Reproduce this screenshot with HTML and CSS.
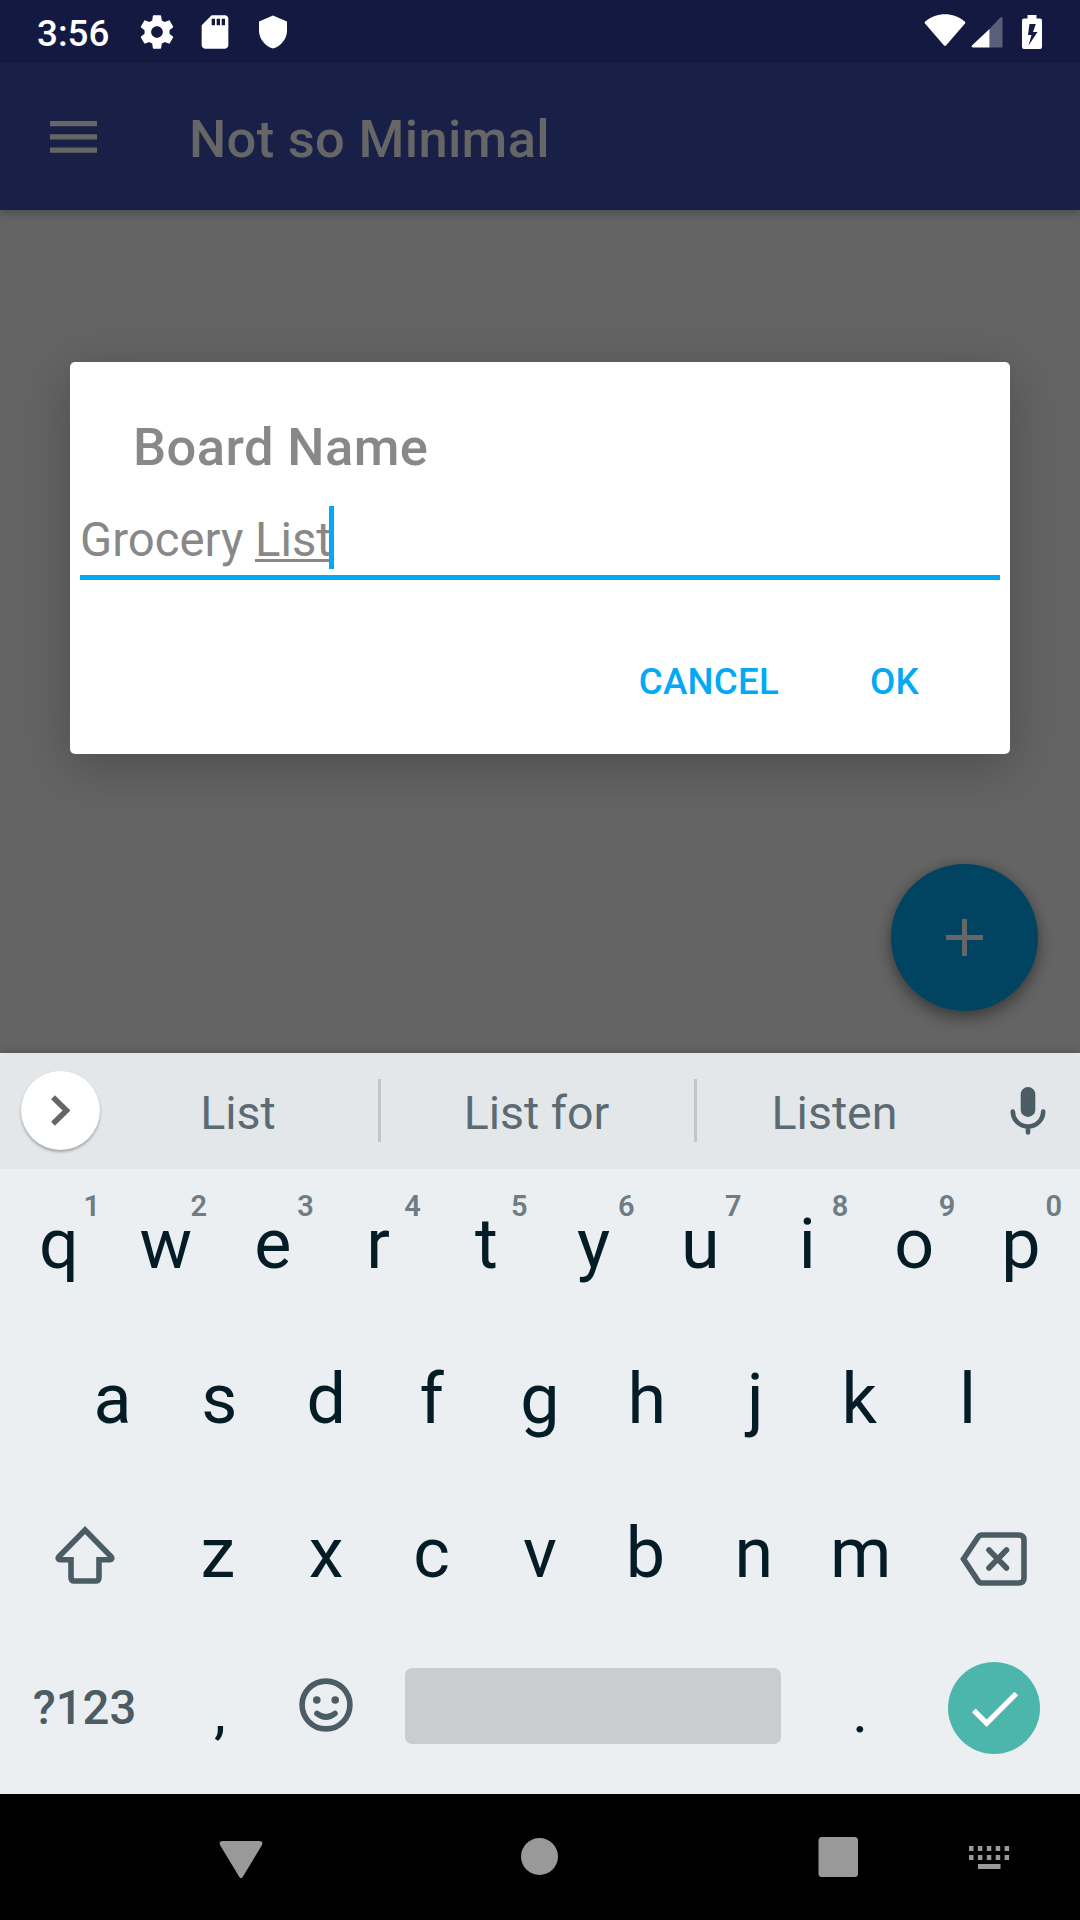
FILE: index.html
```html
<!DOCTYPE html>
<html lang="en">
<head>
<meta charset="utf-8">
<title>Not so Minimal</title>
<link rel="stylesheet" href="styles.css">
</head>
<body>
<div class="screen">
  <header class="status">
    <span class="clock">3:56</span>
    <svg class="gear" width="40" height="40" viewBox="0 0 24 24"><path d="M19.43 12.98c.04-.32.07-.64.07-.98s-.03-.66-.07-.98l2.11-1.65c.19-.15.24-.42.12-.64l-2-3.46c-.12-.22-.39-.3-.61-.22l-2.49 1c-.52-.4-1.08-.73-1.69-.98l-.38-2.65C14.46 2.18 14.25 2 14 2h-4c-.25 0-.46.18-.49.42l-.38 2.65c-.61.25-1.17.59-1.69.98l-2.49-1c-.23-.09-.49 0-.61.22l-2 3.46c-.13.22-.07.49.12.64l2.11 1.65c-.04.32-.07.65-.07.98s.03.66.07.98l-2.11 1.65c-.19.15-.24.42-.12.64l2 3.46c.12.22.39.3.61.22l2.49-1c.52.4 1.08.73 1.69.98l.38 2.65c.03.24.24.42.49.42h4c.25 0 .46-.18.49-.42l.38-2.65c.61-.25 1.17-.59 1.69-.98l2.49 1c.23.09.49 0 .61-.22l2-3.46c.12-.22.07-.49-.12-.64l-2.11-1.65zM12 15.5c-1.93 0-3.5-1.57-3.5-3.5s1.57-3.5 3.5-3.5 3.5 1.57 3.5 3.5-1.57 3.5-3.5 3.5z"/></svg>
    <svg class="sd" width="40" height="40" viewBox="0 0 24 24"><path d="M18 2h-8L4.02 8 4 20c0 1.100.9 2 2 2h12c1.100 0 2-.9 2-2V4c0-1.100-.9-2-2-2zm-6 6h-2V4h2v4zm3 0h-2V4h2v4zm3 0h-2V4h2v4z"/></svg>
    <svg class="shield" width="28" height="34" viewBox="0 0 28 34"><path d="M14 .5L28 6.500V16C28 23.500 22 31.500 14 33.500 6 31.500 0 23.500 0 16V6.500z"/></svg>
    <svg class="wifi" width="42" height="33" viewBox="0 0 42 33"><path d="M1 9.500C.4 8.700.6 7.900 1.300 7.400 13-2 29-2 40.700 7.400c.7.500.9 1.300.3 2.100L22 31.600c-.6.600-1.400.6-2 0z"/></svg>
    <svg class="signal" width="32" height="32" viewBox="0 0 32 32"><path class="faint" d="M18.500 13L29.300 1.600Q31.500 0 31.500 2.500V31.500H18.500z"/><path d="M18.500 13V31.500H2Q-.5 31 1.200 29.300z"/></svg>
    <svg class="battery" width="20" height="34" viewBox="0 0 20 34"><path d="M5.500 0h9v3.500h3.500a2 2 0 0 1 2 2v26.500a2 2 0 0 1-2 2H2a2 2 0 0 1-2-2V5.500a2 2 0 0 1 2-2h3.500zM7.500 9L6 20h3.500L6.500 30.500 15.500 17H11L13.800 9z"/></svg>
  </header>

  <div class="appbar">
    <svg class="menu" width="47" height="32" viewBox="0 0 47 32"><path d="M0 0h47v5.300H0zM0 13.200h47v5.300H0zM0 26.400h47v5.300H0z"/></svg>
    <h1>Not so Minimal</h1>
  </div>

  <main class="board">
    <section class="dialog">
      <h2>Board Name</h2>
      <div class="field"><span>Grocery&nbsp;</span><span class="composing">List</span><i class="caret"></i></div>
      <div class="actions"><span>CANCEL</span><span>OK</span></div>
    </section>
    <div class="fab"><svg width="37" height="37" viewBox="0 0 37 37"><path d="M16 0h5v16h16v5H21v16h-5V21H0v-5h16z"/></svg></div>
  </main>

  <div class="keyboard">
    <div class="suggestions">
      <div class="expand"><svg width="19" height="31" viewBox="0 0 19 31"><path d="M2 2.200L15.500 15.500 2 28.800"/></svg></div>
      <span>List</span><span class="mid">List for</span><span>Listen</span>
      <svg class="mic" width="36" height="48" viewBox="0 0 36 48"><rect x="10.700" y="0" width="14.600" height="30" rx="7.300"/><path d="M2.800 24.500a15.200 15 0 0 0 30.400 0M18 39.500v6"/></svg>
    </div>
    <div class="row">
      <div class="key">q<sup>1</sup></div><div class="key">w<sup>2</sup></div><div class="key">e<sup>3</sup></div><div class="key kern-left">r<sup>4</sup></div><div class="key">t<sup>5</sup></div><div class="key">y<sup>6</sup></div><div class="key">u<sup>7</sup></div><div class="key">i<sup>8</sup></div><div class="key">o<sup>9</sup></div><div class="key">p<sup>0</sup></div>
    </div>
    <div class="row">
      <div class="key">a</div><div class="key">s</div><div class="key">d</div><div class="key kern-left">f</div><div class="key">g</div><div class="key">h</div><div class="key kern-right">j</div><div class="key kern-left">k</div><div class="key">l</div>
    </div>
    <div class="row">
      <div class="key wide"><svg class="line shift" width="60" height="58" viewBox="0 0 60 58"><path d="M30 4L56 30.500Q58 33.200 55 33.700H44V51.500Q44 55 40.500 55H19.500Q16 55 16 51.500V33.700H5Q2 33.200 4 30.500z"/></svg></div>
      <div class="key kern-left">z</div><div class="key">x</div><div class="key kern-left">c</div><div class="key">v</div><div class="key kern-left">b</div><div class="key">n</div><div class="key">m</div>
      <div class="key wide"><svg class="line erase" width="68" height="54" viewBox="0 0 68 54"><path d="M22 3H58.500Q64 3 64 8V46Q64 51 58.500 51H22Q19.500 51 18 48.800L3.500 27 18 5.200Q19.500 3 22 3z"/><path class="cross" d="M29 18L46.500 36M46.500 18L29 36"/></svg></div>
    </div>
    <div class="row">
      <div class="key wide symbols">?123</div>
      <div class="key punct">,</div>
      <div class="key"><svg class="line smiley" width="54" height="54" viewBox="0 0 54 54"><circle cx="27" cy="27" r="23.900"/><path d="M18 35.500Q27 42.500 36 35.500"/><circle class="eye" cx="17.800" cy="22" r="3.800"/><circle class="eye" cx="36.200" cy="22" r="3.800"/></svg></div>
      <div class="space"></div>
      <div class="key punct">.</div>
      <div class="key wide"><div class="enter"><svg width="63" height="63" viewBox="0 0 24 24"><path d="M9 16.170L4.830 12l-1.420 1.410L9 19 21 7l-1.410-1.410z"/></svg></div></div>
    </div>
  </div>

  <nav class="nav">
    <svg width="1080" height="126" viewBox="0 0 1080 126"><path d="M223 47H259Q263.500 47 262 51L243 82.500Q241 86 239 82.500L220 51Q218.500 47 223 47z"/><circle cx="539.500" cy="62.500" r="18.500"/><rect x="818.500" y="43" width="39.500" height="40" rx="3.500"/><path d="M969 52h4.500v5H969zm8.900 0h4.500v5h-4.500zm8.900 0h4.500v5h-4.500zm8.900 0h4.500v5h-4.500zm8.900 0h4.500v5h-4.500zM969 61h4.500v5H969zm8.900 0h4.500v5h-4.500zm8.900 0h4.500v5h-4.500zm8.900 0h4.500v5h-4.500zm8.900 0h4.500v5h-4.500zM978 70h22.500v5H978z"/></svg>
  </nav>
</div>
</body>
</html>
```
FILE: styles.css
```css
* { box-sizing: border-box; margin: 0; padding: 0; }
body { font-family: Roboto, "Liberation Sans", sans-serif; background: #000; }
svg { display: block; flex: none; }

.screen {
  width: 1080px;
  height: 1920px;
  display: flex;
  flex-direction: column;
  overflow: hidden;
}

/* Status bar */
.status {
  height: 63px;
  flex: none;
  display: flex;
  align-items: center;
  padding: 0 38px 0 37px;
  background: #131940;
  color: #fff;
  fill: #fff;
}
.clock { width: 100px; font-size: 36.75px; font-weight: 500; line-height: 43px; padding-top: 3px; }
.sd { margin-left: 18px; }
.shield { margin-left: 24px; }
.wifi { margin: 0 5px 3px auto; }
.signal { margin-right: 19px; }
.faint { fill: #5a5e79; }

/* App bar */
.appbar {
  position: relative;
  z-index: 1;
  height: 147px;
  flex: none;
  display: flex;
  align-items: center;
  padding-left: 50px;
  background: #192048;
  color: #666;
  fill: #666;
  box-shadow: 0 4px 8px rgba(0, 0, 0, .2);
}
.appbar h1 { margin-left: 92px; padding-top: 4px; font-size: 52.5px; font-weight: 500; line-height: 62px; letter-spacing: .3px; }

/* Board and dialog */
.board {
  position: relative;
  height: 843px;
  flex: none;
  padding: 152px 70px 0;
  background: #646464;
}
.dialog {
  height: 392px;
  padding: 53px 10px 0;
  border-radius: 5px;
  background: #fff;
  box-shadow: 0 12px 52px rgba(0, 0, 0, .24);
}
.dialog h2 { padding-left: 53px; font-size: 52.5px; font-weight: 500; line-height: 64px; letter-spacing: .4px; color: #888; }
.field {
  height: 74px;
  margin-top: 27px;
  display: flex;
  border-bottom: 5px solid #03a9f4;
  font-size: 47.25px;
  line-height: 68px;
  color: #888;
}
.composing {
  text-decoration: underline;
  text-decoration-thickness: 3px;
  text-decoration-skip-ink: none;
  text-underline-offset: 3px;
}
.caret { width: 5px; height: 63px; margin-left: -3px; background: #03a9f4; }
.actions {
  display: flex;
  justify-content: flex-end;
  gap: 91px;
  padding: 78px 81px 0 0;
  font-size: 36.75px;
  font-weight: 500;
  line-height: 47px;
  letter-spacing: .2px;
  color: #03a9f4;
}
.fab {
  position: absolute;
  left: 891px;
  top: 654px;
  width: 147px;
  height: 147px;
  display: grid;
  place-items: center;
  border-radius: 50%;
  background: #014462;
  fill: #666;
  box-shadow: 0 8px 16px rgba(0, 0, 0, .32), 0 0 12px rgba(0, 0, 0, .18);
}

/* Keyboard */
.keyboard {
  position: relative;
  height: 741px;
  flex: none;
  background: #ebeff2;
  color: #041c26;
  box-shadow: 0 -2px 8px rgba(0, 0, 0, .12);
}
.suggestions {
  height: 116px;
  display: grid;
  grid-template-columns: 79px 278px 319px 277px 108px;
  align-items: center;
  padding-left: 21px;
  background: #e3e7ea;
  color: #5c6b73;
  font-size: 46.5px;
  text-align: center;
}
.suggestions span { height: 63px; margin-bottom: 1px; padding-right: 2px; line-height: 69px; }
.suggestions .mid { border: solid #c2c6c9; border-width: 0 3px; }
.expand {
  width: 79px;
  height: 79px;
  margin-bottom: 1px;
  display: grid;
  place-items: center;
  border-radius: 50%;
  background: #fff;
  box-shadow: 0 2px 3px rgba(0, 0, 0, .3);
}
.expand path { fill: none; stroke: #666; stroke-width: 5.5; }
.mic { justify-self: center; fill: #4b5c64; }
.mic path { fill: none; stroke: #4b5c64; stroke-width: 4.600; stroke-linecap: round; }

.row { height: 154.500px; display: flex; justify-content: center; }
.key {
  position: relative;
  width: 106.900px;
  padding-bottom: 4px;
  display: flex;
  align-items: center;
  justify-content: center;
  font-size: 70px;
}
.kern-left { padding-right: 3px; }
.kern-right { padding-left: 3px; }
.wide { width: 160.700px; }
.key sup {
  position: absolute;
  left: 78px;
  top: 20px;
  font-size: 29px;
  font-weight: 600;
  line-height: 34px;
  color: #6f7c83;
}
.symbols { padding: 0 3px 4px 0; font-size: 47.250px; font-weight: 500; color: #4b5c64; }
.punct { padding: 4px 0 0; font-size: 60px; }
.space { width: 376px; height: 76px; margin: 35.500px 26px 0 24.5px; border-radius: 7px; background: #c9cdd0; }
.line path, .line circle { fill: none; stroke: #4b5c64; stroke-width: 5.600; stroke-linecap: round; }
.line .eye { fill: #4b5c64; stroke: none; }
.shift { margin: 4px 2px 0 0; }
.erase { margin: 11px 0 0; }
.smiley { margin: 0 2px 5px 0; }
.enter {
  width: 92px;
  height: 92px;
  margin-top: 1px;
  display: grid;
  place-items: center;
  border-radius: 50%;
  background: #4db6ac;
  fill: #fff;
}
.enter svg { margin-left: 2px; }

/* Navigation bar */
.nav { height: 126px; flex: none; background: #000; fill: #999; }
```
